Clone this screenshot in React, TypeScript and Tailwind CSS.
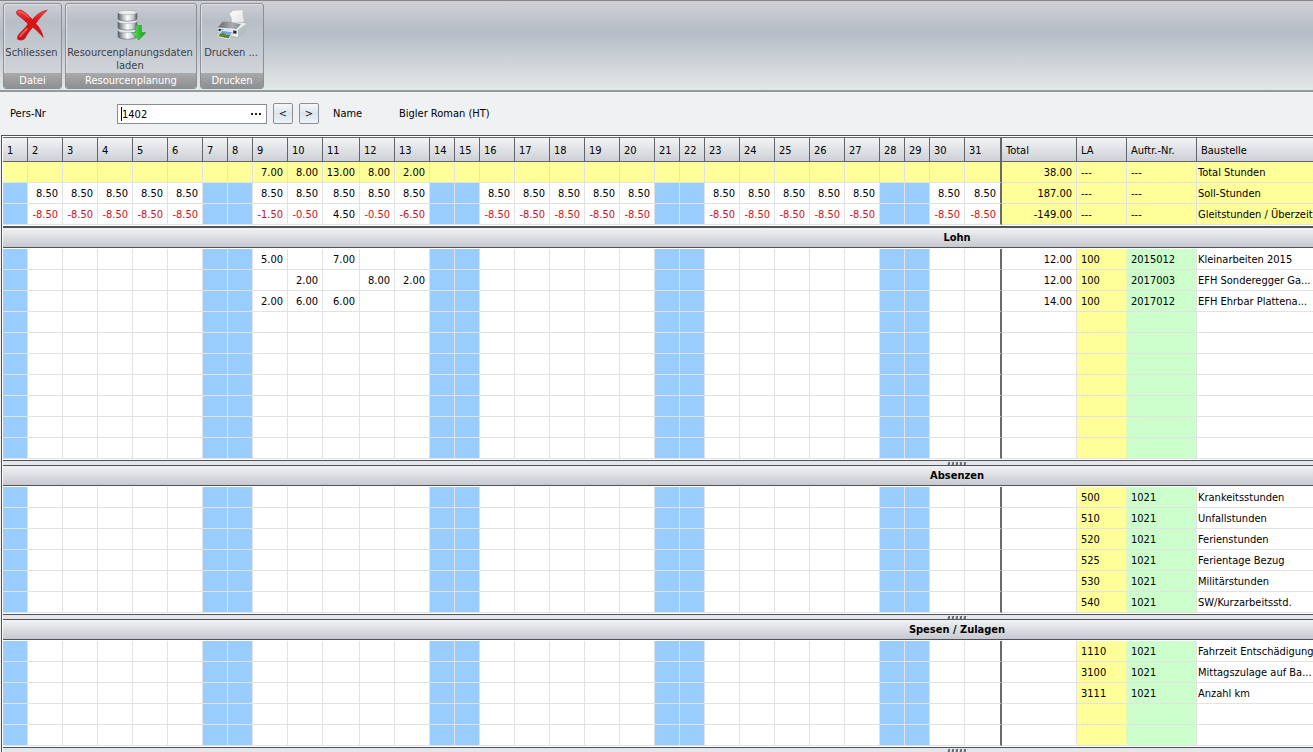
import React from "react";

type Row = {
  values?: Record<number, string>;
  total?: string;
  la?: string;
  order?: string;
  site?: string;
};

const DAYS = Array.from({ length: 31 }, (_, i) => i + 1);
const FREE_DAYS = new Set([1, 7, 8, 14, 15, 21, 22, 28, 29]);

const fill = (value: string, changes: Record<number, string> = {}) => {
  const out: Record<number, string> = {};
  DAYS.forEach((d) => {
    if (!FREE_DAYS.has(d)) out[d] = changes[d] ?? value;
  });
  return out;
};

const SUMMARY: Row[] = [
  {
    values: { 9: "7.00", 10: "8.00", 11: "13.00", 12: "8.00", 13: "2.00" },
    total: "38.00",
    la: "---",
    order: "---",
    site: "Total Stunden",
  },
  { values: fill("8.50"), total: "187.00", la: "---", order: "---", site: "Soll-Stunden" },
  {
    values: fill("-8.50", { 9: "-1.50", 10: "-0.50", 11: "4.50", 12: "-0.50", 13: "-6.50" }),
    total: "-149.00",
    la: "---",
    order: "---",
    site: "Gleitstunden / Überzeit",
  },
];

const WAGES: Row[] = [
  { values: { 9: "5.00", 11: "7.00" }, total: "12.00", la: "100", order: "2015012", site: "Kleinarbeiten 2015" },
  {
    values: { 10: "2.00", 12: "8.00", 13: "2.00" },
    total: "12.00",
    la: "100",
    order: "2017003",
    site: "EFH Sonderegger Ga...",
  },
  {
    values: { 9: "2.00", 10: "6.00", 11: "6.00" },
    total: "14.00",
    la: "100",
    order: "2017012",
    site: "EFH Ehrbar Plattena...",
  },
  ...Array.from({ length: 7 }, () => ({})),
];

const ABSENCES: Row[] = [
  { la: "500", order: "1021", site: "Krankeitsstunden" },
  { la: "510", order: "1021", site: "Unfallstunden" },
  { la: "520", order: "1021", site: "Ferienstunden" },
  { la: "525", order: "1021", site: "Ferientage Bezug" },
  { la: "530", order: "1021", site: "Militärstunden" },
  { la: "540", order: "1021", site: "SW/Kurzarbeitsstd." },
];

const EXPENSES: Row[] = [
  { la: "1110", order: "1021", site: "Fahrzeit Entschädigung" },
  { la: "3100", order: "1021", site: "Mittagszulage auf Ba..." },
  { la: "3111", order: "1021", site: "Anzahl km" },
  {},
  {},
];

function Columns() {
  return (
    <colgroup>
      {DAYS.map((d) => (
        <col key={d} className={FREE_DAYS.has(d) ? "w-[25px]" : d === 11 || d === 31 ? "w-[37px]" : "w-[35px]"} />
      ))}
      <col className="w-[75px]" />
      <col className="w-[50px]" />
      <col className="w-[70px]" />
      <col className="w-[119px]" />
      <col />
    </colgroup>
  );
}

function DataRow({ row, kind }: { row: Row; kind: "sum" | "balance" | "entry" }) {
  const summary = kind !== "entry";
  const cell = "h-[21px] border-b border-r border-[#e1e3e3] p-0 pt-[2px] leading-4 whitespace-nowrap";
  const yellow = "bg-[#ffff99]";
  return (
    <tr>
      {DAYS.map((d) => {
        const v = row.values?.[d];
        const tone = kind === "sum" ? yellow : FREE_DAYS.has(d) ? "bg-[#99ccff]" : "bg-white";
        const edge = d === 31 ? "border-r-2 border-r-[#696969]" : "";
        const ink = v?.startsWith("-") ? "text-[#cc1122]" : "";
        return (
          <td key={d} className={`${cell} ${tone} ${edge} ${ink} pr-1 text-right`}>
            {v}
          </td>
        );
      })}
      <td className={`${cell} ${summary ? yellow : "bg-white"} pr-1 text-right`}>{row.total}</td>
      <td className={`${cell} ${yellow} ${summary ? "" : "border-r-[#eef5b4]"} pl-1`}>{row.la}</td>
      <td className={`${cell} ${summary ? yellow : "bg-[#ccffcc]"} pl-1`}>{row.order}</td>
      <td className={`${cell} ${summary ? yellow : "bg-white"} pl-px`}>{row.site}</td>
      <td className={`${cell} ${summary ? yellow : "bg-white"}`}></td>
    </tr>
  );
}

function Body({ rows, label }: { rows: Row[]; label: string }) {
  return (
    <table aria-label={label} className="w-full table-fixed border-separate border-spacing-0">
      <Columns />
      <tbody>
        {rows.map((r, i) => (
          <DataRow key={i} row={r} kind="entry" />
        ))}
      </tbody>
    </table>
  );
}

function Splitter() {
  return (
    <div className="mt-px flex h-[5px] justify-center gap-px border-t border-[#50535a] bg-[#e4e6ea] pt-px">
      {[0, 1, 2, 3, 4].map((i) => (
        <span key={i} className="h-[3px] w-[3px] -skew-x-12 border-r border-white bg-[#62656b]" />
      ))}
    </div>
  );
}

function SectionTitle({ children, first }: { children: React.ReactNode; first?: boolean }) {
  return (
    <h2
      className={`mb-px border-b border-[#50535a] bg-linear-to-b from-[#f1f2f4] to-[#c6c9cf] pt-px text-center text-[11px] leading-[18px] font-bold ${
        first ? "mt-px border-t-2" : "border-t"
      }`}
    >
      {children}
    </h2>
  );
}

function CloseIcon() {
  return (
    <svg viewBox="0 0 32 32" className="h-8 w-8" aria-hidden="true">
      <defs>
        <linearGradient id="cross" x1="0" y1="0" x2="0" y2="1">
          <stop offset="0" stopColor="#ee4a42" />
          <stop offset=".35" stopColor="#dc1414" />
          <stop offset="1" stopColor="#cc1417" />
        </linearGradient>
      </defs>
      <path
        d="M.5 3C1 1 4 .5 6.500 1.800C10 4 13.500 7.500 16.500 10.500C20.500 5.500 25.500 2 31.300 1.200C27 5 23 9.500 19.800 14.500C23.500 18.500 26 22.500 27.300 28.500C24 24.500 20.500 21 16.800 18.200C13 22.500 10.800 25.500 9.300 29C7.800 31.300 4.800 31.500 1.800 30.500C.8 27.500 2.500 25.500 5 23C7.500 20.500 10 18 12 15C9 11.500 5 8.500 1.500 6C.7 5 .3 4 .5 3Z"
        fill="url(#cross)"
        stroke="#c3161a"
        strokeWidth=".6"
      />
      <path d="M2.500 3C4.500 2.300 6.500 3.500 8.500 5L13 9" fill="none" stroke="#ff9a92" strokeWidth="1" opacity=".6" />
      <path d="M4 28C5 25.500 9 22 11.500 19.500" fill="none" stroke="#f58a84" strokeWidth="2" opacity=".6" />
    </svg>
  );
}

function DatabaseIcon() {
  return (
    <svg viewBox="0 0 32 32" className="h-8 w-8" aria-hidden="true">
      <defs>
        <linearGradient id="drum" x1="0" x2="1">
          <stop offset="0" stopColor="#555c64" />
          <stop offset=".2" stopColor="#a2a9b0" />
          <stop offset=".5" stopColor="#fff" />
          <stop offset=".8" stopColor="#c3c8ce" />
          <stop offset="1" stopColor="#59616a" />
        </linearGradient>
        <linearGradient id="arrow" x1="0" x2="1">
          <stop offset="0" stopColor="#7be070" />
          <stop offset=".5" stopColor="#35c237" />
          <stop offset="1" stopColor="#149420" />
        </linearGradient>
      </defs>
      {[20, 11, 2].map((y) => (
        <g key={y}>
          <path d={`M4 ${y + 2}v5.500c0 3.500 19 3.500 19 0v-5.500z`} fill="url(#drum)" stroke="#5d656e" strokeWidth=".6" />
          <ellipse cx="13.500" cy={y + 1.500} rx="9.500" ry="2.200" fill="#eceef0" stroke="#9aa0a7" strokeWidth=".5" />
        </g>
      ))}
      <path d="M21.500 16.500h6v7H32L24.800 31 17.500 23.500h4z" fill="url(#arrow)" stroke="#35a33a" strokeWidth=".6" />
    </svg>
  );
}

function PrinterIcon() {
  return (
    <svg viewBox="0 0 32 32" className="h-8 w-8" aria-hidden="true">
      <defs>
        <linearGradient id="sheet" x1="0" x2="1" y1="0" y2="1">
          <stop offset="0" stopColor="#fff" />
          <stop offset="1" stopColor="#e1e2e4" />
        </linearGradient>
        <linearGradient id="case" x1="0" x2="1">
          <stop offset="0" stopColor="#64686c" />
          <stop offset=".6" stopColor="#a9adb1" />
          <stop offset="1" stopColor="#888e92" />
        </linearGradient>
      </defs>
      <path d="M14 5.500C15 4 16.500 3 18 1.500L28 .8C27.500 5 29 10 29.500 14L16 14.500C17 11.500 17 7.500 14 5.500z" fill="url(#sheet)" stroke="#b5b8bb" strokeWidth=".5" />
      <path d="M7 13l9-.5 1 2 12-1 3 1v7l-9 7-5-1-15.500-4-.500-4z" fill="#eceff0" stroke="#8d9599" strokeWidth=".5" />
      <path d="M7.500 12.800l9 .2 9.500 2.500-4.500 4.500L3 18.500z" fill="url(#case)" />
      <path d="M23 20.500l9-6v7l-9 7z" fill="#b4bfc0" />
      <path d="M3.500 19.800l5 .7v2.500l-5-1zM18 21.500l3.500.3v3l-4-.5z" fill="#25282b" />
      <path d="M6.500 20.500l12 1.800-4.500 8.500L1.500 28z" fill="#f6f8f9" stroke="#9aa3ab" strokeWidth=".4" />
      <path d="M7 21.800l10 1.500-1.500 2.700L5 24.500z" fill="#6da5e2" />
      <path d="M5 24.500l3-.8 3 1.800 4.500.5-2 3.500L3.200 27.300z" fill="#5f8438" />
    </svg>
  );
}

function RibbonGroup({
  caption,
  icon,
  children,
  width,
}: {
  caption: string;
  icon: React.ReactNode;
  children: React.ReactNode;
  width: string;
}) {
  return (
    <section
      className={`${width} flex shrink-0 flex-col overflow-hidden rounded-[3px] border border-[#8b9097] bg-linear-to-b from-[#cbced4] via-[#b8bec7] via-20% to-[#d5dbdd] shadow-[inset_1px_1px_0_#dfe1e4]`}
    >
      <button type="button" className="flex flex-1 flex-col items-center pt-[5px] pr-[2px] text-[#3c4149]">
        {icon}
        <span className="mt-[5px] block leading-[13px] whitespace-nowrap">{children}</span>
      </button>
      <div className="bg-linear-to-b from-[#a8aaab] to-[#8d8f91] text-center leading-[15px] text-white">{caption}</div>
    </section>
  );
}

export default function App() {
  const stepButton =
    "h-[21px] w-5 rounded-[2px] border border-[#8a9097] bg-linear-to-b from-[#f6f8fa] via-[#dce4ec] to-[#eef3f7] pt-px leading-[18px] text-[#222]";
  const head =
    "h-[25px] border-y border-r border-[#62656b] bg-linear-to-b from-[#f3f4f5] to-[#cdd0d5] p-0 pt-[2px] pl-1 text-left leading-4 font-normal whitespace-nowrap";
  return (
    <div className="overflow-hidden bg-[#eff1f2] font-['DejaVu_Sans_Condensed','DejaVu_Sans',sans-serif] text-[11px] text-black">
      <header className="flex h-[92px] gap-[3px] border-t border-b-2 border-t-[#85898d] border-b-[#94999d] bg-linear-to-b from-[#ced0d4] via-[#b6bcc6] via-35% to-[#e3e9e8] px-[3px] pt-[2px] pb-px">
        <RibbonGroup caption="Datei" width="w-[59px]" icon={<CloseIcon />}>
          Schliessen
        </RibbonGroup>
        <RibbonGroup caption="Resourcenplanung" width="w-[132px]" icon={<DatabaseIcon />}>
          Resourcenplanungsdaten
          <br />
          laden
        </RibbonGroup>
        <RibbonGroup caption="Drucken" width="w-[64px]" icon={<PrinterIcon />}>
          Drucken ...
        </RibbonGroup>
      </header>

      <form className="flex h-[43px] items-center pl-[10px]" onSubmit={(e) => e.preventDefault()}>
        <label htmlFor="pers-nr" className="w-[107px] pt-[2px]">
          Pers-Nr
        </label>
        <div className="flex h-5 w-[150px] items-center border border-[#8a8d91] bg-white">
          <span className="ml-[3px] h-[14px] w-px bg-black" />
          <input id="pers-nr" defaultValue="1402" className="min-w-0 flex-1 bg-transparent pt-[2px] leading-4 outline-none" />
          <button type="button" aria-label="Person suchen" className="flex h-full w-5 items-center justify-center gap-[2px]">
            <i className="h-[2px] w-[2px] bg-[#222]" />
            <i className="h-[2px] w-[2px] bg-[#222]" />
            <i className="h-[2px] w-[2px] bg-[#222]" />
          </button>
        </div>
        <div className="ml-[6px] flex gap-[6px]">
          <button type="button" className={stepButton}>
            &lt;
          </button>
          <button type="button" className={stepButton}>
            &gt;
          </button>
        </div>
        <span className="ml-[14px] w-[66px] pt-[2px]">Name</span>
        <output className="pt-[2px]">Bigler Roman (HT)</output>
      </form>

      <main className="ml-px min-w-[1910px] border-t border-l border-[#50535a] bg-white pt-px pl-px">
        <table aria-label="Stunden" className="w-full table-fixed border-separate border-spacing-0">
          <Columns />
          <thead>
            <tr>
              {DAYS.map((d) => (
                <th key={d} scope="col" className={`${head} ${d === 31 ? "border-r-2" : ""}`}>
                  {d}
                </th>
              ))}
              <th scope="col" className={head}>Total</th>
              <th scope="col" className={head}>LA</th>
              <th scope="col" className={head}>Auftr.-Nr.</th>
              <th scope="col" className={head}>Baustelle</th>
              <td className={head}></td>
            </tr>
          </thead>
          <tbody>
            {SUMMARY.map((r, i) => (
              <DataRow key={i} row={r} kind={i === 0 ? "sum" : "balance"} />
            ))}
          </tbody>
        </table>
        <SectionTitle first>Lohn</SectionTitle>
        <Body rows={WAGES} label="Lohn" />
        <Splitter />
        <SectionTitle>Absenzen</SectionTitle>
        <Body rows={ABSENCES} label="Absenzen" />
        <Splitter />
        <SectionTitle>Spesen / Zulagen</SectionTitle>
        <Body rows={EXPENSES} label="Spesen / Zulagen" />
        <Splitter />
      </main>
    </div>
  );
}
